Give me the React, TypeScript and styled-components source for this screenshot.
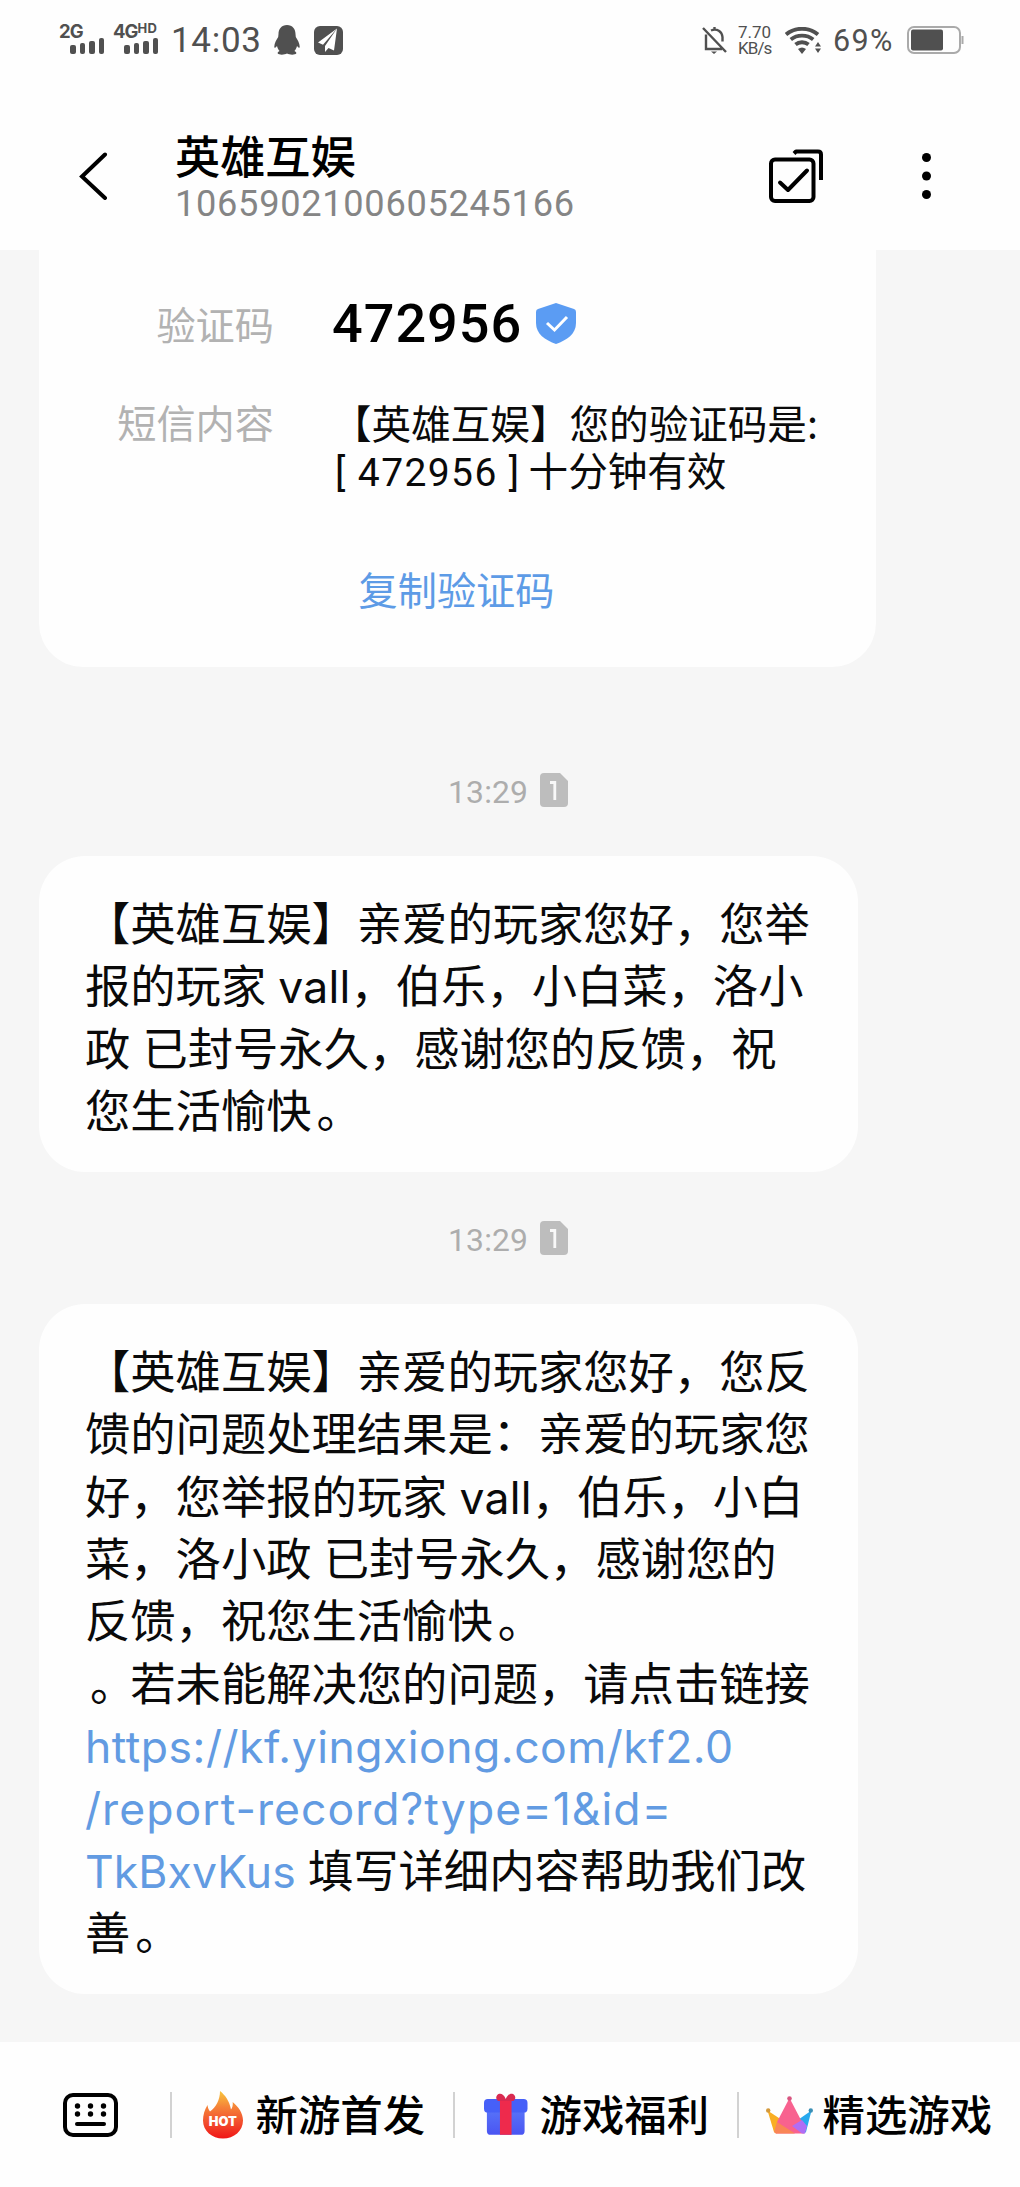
import React from "react";
import styled, { createGlobalStyle } from "styled-components";

const CJK = `"Noto Sans CJK SC", sans-serif`;

const Global = createGlobalStyle`
  * { box-sizing: border-box; }
  html, body { margin: 0; padding: 0; background: #f6f6f6; }
  body { width: 1020px; font-family: Roboto, ${CJK}; }
  svg { display: block; flex: none; }
`;

const Screen = styled.div`
  width: 1020px;
  height: 2187px;
  overflow: hidden;
  display: flex;
  flex-direction: column;
  background: #f6f6f6;
`;

const Top = styled.header`
  height: 250px;
  flex: none;
  background: #fefefe;
`;

const StatusBar = styled.div`
  height: 80px;
  padding: 0 56px 0 59px;
  display: flex;
  justify-content: space-between;
  color: #505050;
`;

const StatusGroup = styled.div`
  display: flex;
  align-items: center;
`;

const Signal = styled.div<{ $w: number; $gap: number }>`
  width: ${(p) => p.$w}px;
  margin-right: ${(p) => p.$gap}px;
  height: 30px;
  margin-top: -3px;
  display: flex;
  flex-direction: column;
  justify-content: space-between;
`;

const Network = styled.div`
  display: flex;
  align-items: flex-start;
  height: 14px;
  font: 700 18.5px/14px Inter, sans-serif;
  letter-spacing: -0.9px;
  white-space: nowrap;
  sup {
    font-size: 13px;
    line-height: 9px;
    vertical-align: baseline;
    letter-spacing: 0.3px;
  }
`;

const Bars = styled.div`
  display: flex;
  justify-content: flex-end;
  align-items: flex-end;
  gap: 4px;
  margin-top: -1px;
`;

const Bar = styled.i<{ $h: number }>`
  width: 5.4px;
  height: ${(p) => p.$h}px;
  border-radius: 2px;
  background: #505050;
`;

const Clock = styled.span`
  font: 400 35px/40px Roboto, sans-serif;
  letter-spacing: 0.7px;
  width: 103px;
  padding-top: 2px;
`;

const Speed = styled.div`
  width: 33px;
  margin: 0 14px 0 11px;
  font: 400 17px/16px Roboto, sans-serif;
  white-space: nowrap;
`;

const SpeedLine = styled.div<{ $ls: number }>`
  letter-spacing: ${(p) => p.$ls}px;
`;

const Percent = styled.span`
  width: 61px;
  font: 400 30.5px/40px Roboto, sans-serif;
  letter-spacing: 1.4px;
  margin: 2px 13px 0 12px;
  white-space: nowrap;
`;

const TitleBar = styled.div`
  display: flex;
  align-items: center;
  height: 110px;
  margin-top: 41px;
  padding: 0 89px 0 79px;
`;

const Titles = styled.div`
  flex: 1;
  margin-left: 67px;
`;

const Name = styled.h1`
  margin: 1px 0 0;
  font: 500 45.2px/52px ${CJK};
  color: #000;
`;

const Num = styled.div`
  font: 400 36.2px/42px Roboto, sans-serif;
  letter-spacing: 0.7px;
  padding-top: 2px;
  color: #858585;
`;

const Thread = styled.main`
  flex: 1;
  display: flex;
  flex-direction: column;
  align-items: flex-start;
  padding-left: 39px;
`;

const CodeCard = styled.section`
  width: 837px;
  height: 417px;
  padding: 41px 0 0 78px;
  background: #fefefe;
  border-radius: 0 0 44px 44px;
`;

const Field = styled.div<{ $top?: number }>`
  display: flex;
  margin-top: ${(p) => p.$top ?? 0}px;
`;

const Label = styled.div<{ $line: number }>`
  width: 157px;
  margin-right: 58px;
  text-align: right;
  font: 400 39.2px/${(p) => p.$line}px ${CJK};
  color: #b2b2b2;
`;

const Code = styled.div`
  display: flex;
  align-items: center;
  gap: 14px;
  font: 500 54px/60px Roboto, sans-serif;
  letter-spacing: 1px;
  color: #000;
`;

const Sms = styled.div`
  font: 400 39.6px/47px ${CJK};
  color: #0a0a0a;
  white-space: nowrap;
`;

const SmsDigits = styled.span`
  font-family: Roboto, sans-serif;
  font-size: 39px;
  letter-spacing: 1.4px;
  margin: 0 8px 0 3px;
`;

const Copy = styled.button`
  display: block;
  width: 679px;
  margin-top: 63px;
  padding: 0;
  border: 0;
  background: none;
  text-align: center;
  font: 400 39.2px/56px ${CJK};
  color: #5d9be6;
`;

const Stamp = styled.div<{ $top: number }>`
  display: flex;
  align-items: center;
  height: 34px;
  margin: ${(p) => p.$top}px 0 49px 409px;
  gap: 12px;
  font: 400 31.8px/34px Roboto, sans-serif;
  color: #adadad;
`;

const StampTime = styled.span`
  width: 80px;
  padding-top: 4px;
  letter-spacing: 0.2px;
`;

const Bubble = styled.section<{ $h: number }>`
  width: 819px;
  height: ${(p) => p.$h}px;
  padding: 34px 0 0 46px;
  background: #fefefe;
  border-radius: 46px;
`;

const Line = styled.div`
  font: 400 45.3px/62.35px ${CJK};
  height: 62.35px;
  color: #0a0a0a;
  white-space: pre;
  word-spacing: 2px;
`;

const Stop = styled.span`
  margin: 0 -5px 0 5px;
`;

const Latin = styled.span<{ $link?: boolean; $ls?: number }>`
  font-family: Inter, sans-serif;
  font-size: 44.5px;
  letter-spacing: ${(p) => p.$ls ?? 0.2}px;
  color: ${(p) => (p.$link ? "#629be2" : "inherit")};
`;

const Footer = styled.footer`
  height: 145px;
  flex: none;
  padding-left: 63px;
  display: flex;
  align-items: center;
  background: #fefefe;
`;

const MenuItem = styled.button<{ $gap: number; $pad: number }>`
  display: flex;
  align-items: center;
  width: 283.5px;
  height: 46px;
  flex: none;
  padding: 0 0 0 ${(p) => p.$pad}px;
  gap: ${(p) => p.$gap}px;
  border: 0;
  border-left: 2px solid #d2d2d2;
  background: none;
  white-space: nowrap;
`;

const MenuText = styled.span`
  font: 500 42.4px/46px ${CJK};
  color: #000;
  padding-bottom: 4px;
`;

const KeyboardSlot = styled.div`
  width: 107px;
`;

const SignalBars = () => (
  <Bars>
    {[9, 11, 13, 16].map((h) => (
      <Bar key={h} $h={h} />
    ))}
  </Bars>
);

const SimIcon = () => (
  <svg width="28" height="34" viewBox="0 0 28 34">
    <path d="M4 0H20L28 8V30a4 4 0 0 1-4 4H4a4 4 0 0 1-4-4V4a4 4 0 0 1 4-4Z" fill="#bdbdbd" />
    <path d="M10 9.5H14.8V27" fill="none" stroke="#f8f8f8" strokeWidth="2.8" />
  </svg>
);

const TimeStamp = ({ top }: { top: number }) => (
  <Stamp $top={top}>
    <StampTime>13:29</StampTime>
    <SimIcon />
  </Stamp>
);

const first = [
  <>【英雄互娱】亲爱的玩家您好，您举</>,
  <>报的玩家 <Latin>vall</Latin>，伯乐，小白菜，洛小</>,
  <>政 已封号永久，感谢您的反馈，祝</>,
  <>您生活愉快<Stop>。</Stop></>,
];

const second = [
  <>【英雄互娱】亲爱的玩家您好，您反</>,
  <>馈的问题处理结果是：亲爱的玩家您</>,
  <>好，您举报的玩家 <Latin>vall</Latin>，伯乐，小白</>,
  <>菜，洛小政 已封号永久，感谢您的</>,
  <>反馈，祝您生活愉快<Stop>。</Stop></>,
  <><Stop>。</Stop>若未能解决您的问题，请点击链接</>,
  <Latin $link $ls={0.5}>https://kf.yingxiong.com/kf2.0</Latin>,
  <Latin $link $ls={1.05}>/report-record?type=1&amp;id=</Latin>,
  <><Latin $link $ls={0.1}>TkBxvKus</Latin> 填写详细内容帮助我们改</>,
  <>善<Stop>。</Stop></>,
];

export default function App() {
  return (
    <>
      <Global />
      <Screen>
        <Top>
          <StatusBar>
            <StatusGroup>
              <Signal $w={45} $gap={9}>
                <Network>2G</Network>
                <SignalBars />
              </Signal>
              <Signal $w={45} $gap={13}>
                <Network>4G<sup>HD</sup></Network>
                <SignalBars />
              </Signal>
              <Clock>14:03</Clock>
              <svg width="26" height="30" viewBox="0 0 26 30" fill="#505050">
                <path d="M13 0C7.500 0 4.500 4 4.500 9L4.200 12C2.400 15 .4 18 .3 21.500c0 2 1 1.600 2.700-.5.500 2 1.300 3.700 2.600 5-1.600.8-2.300 1.700-1.800 2.600.8 1.400 6.600 1.500 9.200 0 2.600 1.500 8.400 1.400 9.200 0 .5-.9-.2-1.800-1.800-2.600 1.300-1.300 2.100-3 2.600-5 1.700 2.100 2.700 2.500 2.700.5-.1-3.500-2.100-6.500-3.900-9.500L21.500 9C21.500 4 18.500 0 13 0Z" />
              </svg>
              <svg width="29" height="29" viewBox="0 0 29 29" style={{ marginLeft: 14 }}>
                <rect width="29" height="29" rx="6" fill="#505050" />
                <path d="M23 2.500 4 16.500l5 2.200ZM23 2.500 11 20v6l3.500-4 5.500 2.500Z" fill="#fff" />
              </svg>
            </StatusGroup>
            <StatusGroup>
              <svg width="25" height="27" viewBox="0 0 25 27" fill="none" stroke="#505050" strokeWidth="2.400">
                <path d="M1 1 24 25M4 7.500V22H20M9 3.500C15 1 20 4.500 20.500 10v4.500M12.500 0v3" />
                <path d="M9 24.500h6l-3 2.500Z" fill="#505050" stroke="none" />
              </svg>
              <Speed>
                <SpeedLine $ls={0}>7.70</SpeedLine>
                <SpeedLine $ls={-0.9}>KB/s</SpeedLine>
              </Speed>
              <svg width="36" height="27" viewBox="0 0 36 27" fill="none" stroke="#505050" strokeWidth="3.800">
                <path d="M1 7.500C10-.2 24-.2 33 7.500M5.800 12.500c6.300-5.200 16.100-5.200 22.400 0M10.500 17.500c3.600-3 9.400-3 13 0" />
                <path d="M13 22q4-3 8 0l-4 5ZM30 19.500l3-4.500 3 4.500ZM30 21.500l3 4.500 3-4.500Z" fill="#505050" stroke="none" />
              </svg>
              <Percent>69%</Percent>
              <svg width="57" height="28" viewBox="0 0 57 28">
                <rect x="1" y="1" width="52" height="26" rx="6" fill="none" stroke="#aaa" strokeWidth="2" />
                <rect x="4" y="3.500" width="32" height="21" rx="2" fill="#505050" />
                <path d="M55.500 10v8" stroke="#aaa" strokeWidth="2" />
              </svg>
            </StatusGroup>
          </StatusBar>
          <TitleBar>
            <svg width="29" height="48" viewBox="0 0 29 48" fill="none" stroke="#000" strokeWidth="4" strokeLinecap="round" strokeLinejoin="miter">
              <path d="M26 2.500 3 24.500 26 46" />
            </svg>
            <Titles>
              <Name>英雄互娱</Name>
              <Num>1065902100605245166</Num>
            </Titles>
            <svg width="54" height="54" viewBox="0 0 54 54" fill="none" stroke="#000" strokeWidth="4" strokeLinejoin="round">
              <rect x="2" y="10.500" width="42.500" height="41.500" rx="4" />
              <path d="M11 33.500 19 41 38 21.500" strokeLinecap="round" />
              <path d="M25 4.500 27 2.500H49q3 0 3 3V31" />
            </svg>
            <svg width="9" height="46" viewBox="0 0 9 46" style={{ marginLeft: 99 }}>
              <circle cx="4.500" cy="4.500" r="4.500" />
              <circle cx="4.500" cy="23" r="4.500" />
              <circle cx="4.500" cy="41.500" r="4.500" />
            </svg>
          </TitleBar>
        </Top>
        <Thread>
          <CodeCard>
            <Field>
              <Label $line={65}>验证码</Label>
              <Code>
                472956
                <svg width="40" height="41" viewBox="0 0 40 41">
                  <path d="M20 0 38 6q2 .7 2 3V20c0 11-9 17-20 21C9 37 0 31 0 20V9q0-2.300 2-3Z" fill="#5b9cf3" />
                  <path d="m11 20 7.500 7L31 14" fill="none" stroke="#fff" strokeWidth="3" />
                </svg>
              </Code>
            </Field>
            <Field $top={42}>
              <Label $line={47}>短信内容</Label>
              <Sms>
                【英雄互娱】您的验证码是:
                <br />
                <SmsDigits>[ 472956 ]</SmsDigits>十分钟有效
              </Sms>
            </Field>
            <Copy>复制验证码</Copy>
          </CodeCard>
          <TimeStamp top={106} />
          <Bubble $h={316}>
            {first.map((line, i) => (
              <Line key={i}>{line}</Line>
            ))}
          </Bubble>
          <TimeStamp top={49} />
          <Bubble $h={690}>
            {second.map((line, i) => (
              <Line key={i}>{line}</Line>
            ))}
          </Bubble>
        </Thread>
        <Footer>
          <KeyboardSlot>
            <svg width="55" height="44" viewBox="0 0 55 44">
              <rect x="2" y="2" width="51" height="40" rx="8" fill="none" stroke="#000" strokeWidth="4" />
              <path d="M14 31H41" stroke="#000" strokeWidth="4" strokeLinecap="round" />
              {[14.5, 27.5, 40.5].map((x) => (
                <g key={x}>
                  <circle cx={x} cy="13" r="2.700" />
                  <circle cx={x} cy="21" r="2.700" />
                </g>
              ))}
            </svg>
          </KeyboardSlot>
          <MenuItem $pad={31} $gap={13}>
            <svg width="40" height="48" viewBox="0 0 40 48">
              <defs>
                <linearGradient id="flame" x1="0" y1="0" x2="0" y2="1">
                  <stop offset="0" stopColor="#f8c63c" />
                  <stop offset=".35" stopColor="#f58038" />
                  <stop offset=".65" stopColor="#f2502e" />
                  <stop offset="1" stopColor="#f01616" />
                </linearGradient>
              </defs>
              <path d="M17 0c5 4 9.500 10 11 18.500 1.500-2 2-4.500 1.700-7.500C35.500 16 40 22 40 29.500 40 40 31 47.500 20 47.500S0 40 0 29.500C0 24 1.500 19 4.500 14c.3 2.500 1 4.500 2.500 6.500C13 16 17 9 17 0Z" fill="url(#flame)" />
              <text x="19.800" y="35" textAnchor="middle" fill="#fff" fontFamily="Inter, sans-serif" fontWeight="900" fontSize="12.500" textLength="28" lengthAdjust="spacingAndGlyphs">HOT</text>
            </svg>
            <MenuText>新游首发</MenuText>
          </MenuItem>
          <MenuItem $pad={29} $gap={12}>
            <svg width="43.500" height="43" viewBox="0 0 45 44">
              <defs>
                <linearGradient id="box" x1="0" y1="0" x2="0" y2="1">
                  <stop offset="0" stopColor="#5b7bfa" />
                  <stop offset="1" stopColor="#4a55f2" />
                </linearGradient>
              </defs>
              <rect x="3" y="10" width="39" height="33" rx="4" fill="url(#box)" />
              <rect x="0" y="6" width="45" height="14" rx="4" fill="#4660f8" />
              <path d="M16.500 6h12v37h-12Z" fill="#ee2a4c" />
              <path d="M22.500 6C20 0 16-.5 13.500 2c-1.500 2-1 4.500 1 6h16c2-1.500 2.500-4 1-6C29-.5 25 0 22.500 6Z" fill="#d92a50" />
            </svg>
            <MenuText>游戏福利</MenuText>
          </MenuItem>
          <MenuItem $pad={27} $gap={10}>
            <svg width="47" height="38" viewBox="0 0 47 38">
              <path d="M1.500 14.500 22 28 10 37.500 8 36Z" fill="#f9ae22" />
              <path d="M45.500 14.500 26 28 38 37.500 40 36Z" fill="#27a9ee" />
              <path d="M23.500 2 36 26 38 37.500H10L11 26Z" fill="#f8628f" />
              <path d="m11 26 18 11.500H10L8 36Z" fill="#f98656" />
              <path d="m36 24-10 6 10 7.500H39L41 30Z" fill="#b06df5" />
              <circle cx="23.500" cy="2.500" r="2.300" fill="#d85580" />
              <circle cx="2.200" cy="14.500" r="2.200" fill="#d49a3c" />
              <circle cx="44.800" cy="14.500" r="2.200" fill="#3a8fb5" />
            </svg>
            <MenuText>精选游戏</MenuText>
          </MenuItem>
        </Footer>
      </Screen>
    </>
  );
}
